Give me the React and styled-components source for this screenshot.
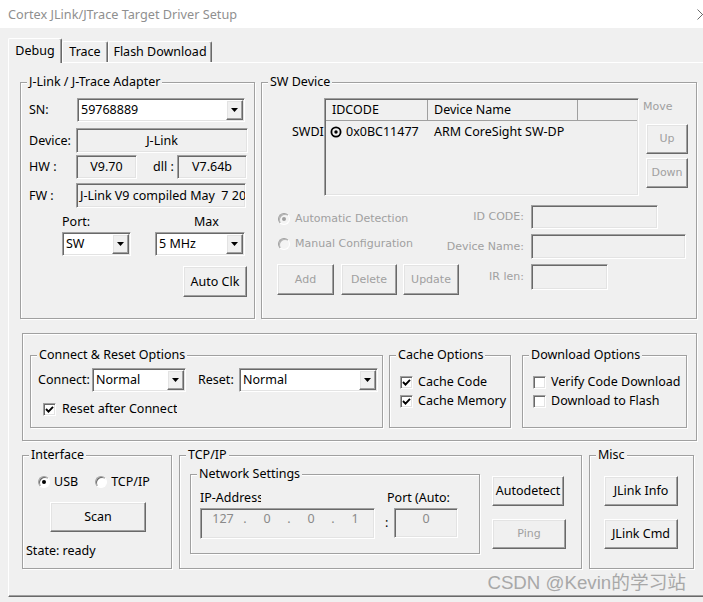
import React from "react";
import styled, { createGlobalStyle, css } from "styled-components";

const UI = `"Noto Sans", "Open Sans", sans-serif`;
const OLD = `"DejaVu Sans", "Liberation Sans", sans-serif`;

const Global = createGlobalStyle`
  html, body { margin: 0; padding: 0; background: #f0f0f0; }
  body { font-family: ${UI}; }
  *, *::before, *::after { box-sizing: border-box; }
`;

const dimText = css`
  font-family: ${OLD};
  font-size: 11px;
  color: #a0a0a0;
`;

const sunken = css`
  border: 1px solid;
  border-color: #a0a0a0 #ffffff #ffffff #a0a0a0;
  box-shadow: inset 1px 1px #696969, inset -1px -1px #e3e3e3;
`;

const raised = css`
  border: 1px solid;
  border-color: #ffffff #696969 #696969 #ffffff;
  box-shadow: inset -1px -1px #a0a0a0, inset 1px 1px #e3e3e3;
`;

const Window = styled.div`
  position: relative;
  width: 703px;
  height: 602px;
  overflow: hidden;
  display: flex;
  flex-direction: column;
  background: #f0f0f0;
  font-family: ${UI};
  font-size: 12.5px;
  line-height: 16px;
  color: #000;
`;

const TitleBar = styled.div`
  flex: none;
  height: 28px;
  background: #fff;
  display: flex;
  align-items: center;
  justify-content: space-between;
  padding-left: 8px;
`;

const Title = styled.div`
  font-size: 12.7px;
  color: #8f8f8f;
  white-space: nowrap;
`;

const CloseIcon = styled.svg`
  flex: none;
  margin-right: -5px;
`;

const Body = styled.div`
  flex: 1;
  display: flex;
  flex-direction: column;
  padding-left: 8px;
`;

const TabStrip = styled.div`
  flex: none;
  height: 34px;
  display: flex;
  align-items: flex-end;
`;

const Tab = styled.div`
  flex: none;
  width: ${(p) => p.$w}px;
  height: ${(p) => (p.$active ? 25 : 21)}px;
  margin-bottom: ${(p) => (p.$active ? -1 : 0)}px;
  position: relative;
  z-index: ${(p) => (p.$active ? 1 : 0)};
  background: #f0f0f0;
  border-top: 1px solid #fff;
  border-left: 1px solid #fff;
  border-right: 1px solid #696969;
  box-shadow: inset -1px 0 #a0a0a0;
  border-radius: 2px 2px 0 0;
  display: flex;
  align-items: center;
  justify-content: center;
  white-space: nowrap;
`;

const TabPage = styled.div`
  flex: none;
  height: 535px;
  border-top: 1px solid #fff;
  border-left: 1px solid #fff;
  border-bottom: 1px solid #696969;
  box-shadow: inset 0 -1px #a0a0a0;
  padding: 19px 0 0 11px;
  display: flex;
  flex-direction: column;
`;

const Row = styled.div`
  display: flex;
  align-items: flex-start;
  gap: ${(p) => p.$gap || 0}px;
  margin-top: ${(p) => p.$mt || 0}px;
  margin-left: ${(p) => p.$ml || 0}px;
`;

const GroupBox = styled.div`
  flex: none;
  position: relative;
  width: ${(p) => p.$w}px;
  height: ${(p) => p.$h}px;
  margin-left: ${(p) => p.$ml || 0}px;
  border: 1px solid #a0a0a0;
  box-shadow: inset 1px 1px #fff, 1px 1px #fff;
`;

const GroupTitle = styled.span`
  position: absolute;
  top: -9px;
  left: 6px;
  padding: 0 2px;
  background: #f0f0f0;
  line-height: 16px;
  white-space: nowrap;
`;

const Label = styled.span`
  flex: none;
  width: ${(p) => (p.$w ? `${p.$w}px` : "auto")};
  margin-left: ${(p) => p.$ml || 0}px;
  padding-left: ${(p) => p.$pl || 0}px;
  text-align: ${(p) => (p.$right ? "right" : "left")};
  white-space: pre;
  overflow: hidden;
  ${(p) => p.$disabled && dimText}
`;

const Combo = styled.div`
  flex: none;
  width: ${(p) => p.$w}px;
  height: ${(p) => p.$h || 24}px;
  margin-left: ${(p) => p.$ml || 0}px;
  ${sunken};
  background: #fff;
  padding: 1px;
  display: flex;
`;

const ComboText = styled.div`
  flex: 1;
  min-width: 0;
  padding-left: 2px;
  display: flex;
  align-items: center;
  white-space: nowrap;
  overflow: hidden;
`;

const DropBtn = styled.div`
  flex: none;
  width: 17px;
  ${raised};
  background: #f0f0f0;
  display: flex;
  align-items: center;
  justify-content: center;
`;

const ReadBox = styled.div`
  flex: none;
  width: ${(p) => p.$w}px;
  height: ${(p) => p.$h || 24}px;
  ${sunken};
  background: #f0f0f0;
  display: flex;
  align-items: ${(p) => (p.$top ? "flex-start" : "center")};
  justify-content: ${(p) => (p.$center ? "center" : "flex-start")};
  padding: ${(p) => (p.$top ? "2px 0 0 0" : "0")};
  padding-left: ${(p) => (p.$center ? 0 : 3)}px;
  white-space: pre;
  overflow: hidden;
  color: ${(p) => (p.$grey ? "#8a8a8a" : "#000")};
`;

const Button = styled.button`
  flex: none;
  width: ${(p) => p.$w}px;
  height: ${(p) => p.$h || 30}px;
  margin-left: ${(p) => p.$ml || 0}px;
  margin-top: ${(p) => p.$mt || 0}px;
  padding: 0;
  ${raised};
  background: #f0f0f0;
  font: inherit;
  color: #000;
  display: flex;
  align-items: center;
  justify-content: center;
  white-space: nowrap;
  cursor: default;
  ${(p) => p.$disabled && dimText}
`;

const Check = styled.span`
  flex: none;
  width: 13px;
  height: 13px;
  ${sunken};
  background: #fff;
  display: flex;
  align-items: center;
  justify-content: center;
`;

const RadioDot = styled.span`
  flex: none;
  position: relative;
  width: 12px;
  height: 12px;
  border-radius: 50%;
  border: 1px solid;
  border-color: #a0a0a0 #fff #fff #a0a0a0;
  box-shadow: inset 1px 1px ${(p) => (p.$disabled ? "#b4b4b4" : "#696969")};
  background: ${(p) => (p.$disabled ? "#f4f4f4" : "#fff")};
  margin-left: ${(p) => p.$ml || 0}px;
  &::after {
    content: "";
    display: ${(p) => (p.$on ? "block" : "none")};
    position: absolute;
    left: 3px;
    top: 3px;
    width: 4px;
    height: 4px;
    border-radius: 50%;
    background: ${(p) => (p.$disabled ? "#a0a0a0" : "#000")};
  }
`;

const OptionItem = styled.div`
  display: flex;
  align-items: center;
  gap: ${(p) => p.$gap || 5}px;
  height: 16px;
  margin-left: ${(p) => p.$ml || 0}px;
  white-space: nowrap;
  overflow: hidden;
  width: ${(p) => (p.$w ? `${p.$w}px` : "auto")};
  ${(p) => p.$disabled && dimText}
`;

/* ---------- adapter ---------- */
const AdapterBody = styled.div`
  display: flex;
  flex-direction: column;
  padding: 15px 0 0 8px;
`;

const FieldRow = styled.div`
  display: flex;
  align-items: center;
  margin-top: ${(p) => p.$mt || 0}px;
`;

const PortGrid = styled.div`
  display: grid;
  grid-template-columns: 69px 90px;
  column-gap: 24px;
  row-gap: 2px;
  margin-top: 6px;
  padding-left: 33px;
`;

/* ---------- SW device ---------- */
const SwTop = styled.div`
  display: flex;
  align-items: flex-start;
  padding: 15px 0 0 30px;
`;

const SwdiLabel = styled.span`
  flex: none;
  width: 32px;
  margin-top: 26px;
  white-space: nowrap;
  overflow: hidden;
`;

const ListView = styled.div`
  flex: none;
  width: 315px;
  height: 98px;
  ${sunken};
  background: #f0f0f0;
  padding: 1px;
  display: flex;
  flex-direction: column;
  overflow: hidden;
`;

const ListHeader = styled.div`
  display: flex;
  height: 21px;
  border-bottom: 1px solid #a0a0a0;
`;

const HeaderCell = styled.div`
  flex: ${(p) => (p.$w ? "none" : "1")};
  width: ${(p) => (p.$w ? `${p.$w}px` : "auto")};
  border-right: ${(p) => (p.$w ? "1px solid #a0a0a0" : "none")};
  padding-left: 6px;
  display: flex;
  align-items: center;
  white-space: nowrap;
`;

const ListRow = styled.div`
  display: flex;
  height: 21px;
  align-items: center;
`;

const ListCell = styled.div`
  flex: none;
  width: ${(p) => p.$w}px;
  padding-left: ${(p) => p.$pl}px;
  display: flex;
  align-items: center;
  gap: 4px;
  white-space: nowrap;
`;

const MoveCol = styled.div`
  display: flex;
  flex-direction: column;
  margin-left: 4px;
`;

const MoveLabel = styled.span`
  ${dimText};
  margin-top: 1px;
  line-height: 16px;
`;

const SwBottom = styled.div`
  display: flex;
  flex-direction: column;
  gap: 5px;
  margin-top: 9px;
  padding-left: 15px;
`;

const SwRow = styled.div`
  display: flex;
  align-items: ${(p) => (p.$start ? "flex-start" : "center")};
  height: ${(p) => p.$h}px;
`;

const LeftCell = styled.div`
  flex: none;
  width: ${(p) => p.$w}px;
  display: flex;
  align-items: center;
  padding-top: ${(p) => p.$pt || 0}px;
  padding-bottom: ${(p) => p.$pb || 0}px;
`;

const FieldPair = styled.div`
  display: flex;
  align-items: center;
  gap: 7px;
`;

/* ---------- options frame ---------- */
const FrameInner = styled.div`
  display: flex;
  align-items: flex-start;
  padding: 21px 0 0 7px;
`;

const ConnectBody = styled.div`
  display: flex;
  flex-direction: column;
  padding: 12px 0 0 7px;
`;

const CheckList = styled.div`
  display: flex;
  flex-direction: column;
  gap: 3px;
  padding: 18px 0 0 10px;
`;

/* ---------- bottom row ---------- */
const InterfaceBody = styled.div`
  display: flex;
  flex-direction: column;
  align-items: flex-start;
  padding-left: 3px;
`;

const RadioRow = styled.div`
  display: flex;
  gap: 17px;
  margin: 18px 0 0 12px;
`;

const StateText = styled.div`
  margin-top: 11px;
`;

const TcpBody = styled.div`
  display: flex;
  align-items: flex-start;
  padding: 18px 0 0 10px;
`;

const NsBody = styled.div`
  display: flex;
  align-items: flex-start;
  padding: 15px 0 0 9px;
`;

const Col = styled.div`
  display: flex;
  flex-direction: column;
  align-items: flex-start;
  margin-left: ${(p) => p.$ml || 0}px;
  margin-top: ${(p) => p.$mt || 0}px;
  padding-left: ${(p) => p.$pl || 0}px;
`;

const IpBox = styled.div`
  width: 175px;
  height: 31px;
  margin-top: 2px;
  ${sunken};
  background: #f0f0f0;
  display: flex;
  align-items: flex-start;
  padding: 2px 0 0 4px;
  color: #8a8a8a;
`;

const Octet = styled.span`
  flex: none;
  width: ${(p) => (p.$dot ? 8 : 36)}px;
  text-align: center;
`;

const PortRow = styled.div`
  display: flex;
  align-items: center;
  margin-top: 2px;
`;

const Colon = styled.span`
  width: 9px;
`;

const Watermark = styled.div`
  position: absolute;
  right: 17px;
  top: 571px;
  font-family: "Liberation Sans", "Noto Sans CJK SC", sans-serif;
  font-size: 18.7px;
  line-height: 24px;
  color: #a8a8a8;
  white-space: nowrap;
`;

/* ---------- small parts ---------- */
const Tri = () => (
  <svg width="7" height="4" viewBox="0 0 7 4">
    <polygon points="0,0 7,0 3.5,4" fill="#000" />
  </svg>
);

const Drop = ({ w, h, ml, children }) => (
  <Combo $w={w} $h={h} $ml={ml}>
    <ComboText>{children}</ComboText>
    <DropBtn>
      <Tri />
    </DropBtn>
  </Combo>
);

const CheckBox = ({ on }) => (
  <Check>
    {on && (
      <svg width="9" height="9" viewBox="0 0 9 9">
        <polyline points="1,4 3.5,6.6 8,1.8" fill="none" stroke="#000" strokeWidth="1.9" />
      </svg>
    )}
  </Check>
);

const TargetIcon = () => (
  <svg width="12" height="12" viewBox="0 0 12 12">
    <circle cx="6" cy="6" r="4.6" fill="none" stroke="#000" strokeWidth="1.8" />
    <circle cx="6" cy="6" r="1.7" fill="#000" />
  </svg>
);

export default function App() {
  return (
    <Window>
      <Global />
      <TitleBar>
        <Title>Cortex JLink/JTrace Target Driver Setup</Title>
        <CloseIcon width="11" height="11" viewBox="0 0 11 11">
          <path d="M0.5 0.5 L10.5 10.5 M10.5 0.5 L0.5 10.5" stroke="#6a6a6a" strokeWidth="1" />
        </CloseIcon>
      </TitleBar>

      <Body>
        <TabStrip>
          <Tab $w={54} $active>Debug</Tab>
          <Tab $w={46}>Trace</Tab>
          <Tab $w={104}>Flash Download</Tab>
        </TabStrip>

        <TabPage>
          <Row $gap={6}>
            <GroupBox $w={235} $h={237}>
              <GroupTitle>J-Link / J-Trace Adapter</GroupTitle>
              <AdapterBody>
                <FieldRow>
                  <Label $w={47}>SN:</Label>
                  <Drop w={168} ml={1}>59768889</Drop>
                </FieldRow>
                <FieldRow $mt={6}>
                  <Label $w={47}>Device:</Label>
                  <ReadBox $w={172} $h={25} $center>J-Link</ReadBox>
                </FieldRow>
                <FieldRow $mt={2}>
                  <Label $w={47}>HW :</Label>
                  <ReadBox $w={61} $h={24} $center>V9.70</ReadBox>
                  <Label $w={24} $ml={16}>dll :</Label>
                  <ReadBox $w={70} $h={24} $center>V7.64b</ReadBox>
                </FieldRow>
                <FieldRow $mt={4}>
                  <Label $w={47}>FW :</Label>
                  <ReadBox $w={170} $h={25}>J-Link V9 compiled May  7 2018 10:36:57</ReadBox>
                </FieldRow>
                <PortGrid>
                  <Label>Port:</Label>
                  <Label $pl={39}>Max</Label>
                  <Drop w={69}>SW</Drop>
                  <Drop w={90}>5 MHz</Drop>
                </PortGrid>
                <Button $w={64} $h={31} $ml={154} $mt={10}>Auto Clk</Button>
              </AdapterBody>
            </GroupBox>

            <GroupBox $w={436} $h={237}>
              <GroupTitle>SW Device</GroupTitle>
              <SwTop>
                <SwdiLabel>SWDI</SwdiLabel>
                <ListView>
                  <ListHeader>
                    <HeaderCell $w={102}>IDCODE</HeaderCell>
                    <HeaderCell $w={150}>Device Name</HeaderCell>
                    <HeaderCell />
                  </ListHeader>
                  <ListRow>
                    <ListCell $w={102} $pl={4}>
                      <TargetIcon />
                      0x0BC11477
                    </ListCell>
                    <ListCell $w={150} $pl={6}>ARM CoreSight SW-DP</ListCell>
                  </ListRow>
                </ListView>
                <MoveCol>
                  <MoveLabel>Move</MoveLabel>
                  <Button $w={42} $h={30} $ml={3} $mt={9} $disabled>Up</Button>
                  <Button $w={42} $h={30} $ml={3} $mt={4} $disabled>Down</Button>
                </MoveCol>
              </SwTop>

              <SwBottom>
                <SwRow $h={24}>
                  <LeftCell $w={165} $pt={4}>
                    <OptionItem $disabled>
                      <RadioDot $disabled $on $ml={1} />
                      Automatic Detection
                    </OptionItem>
                  </LeftCell>
                  <FieldPair>
                    <Label $w={82} $right $disabled>ID CODE:</Label>
                    <ReadBox $w={127} $h={24} />
                  </FieldPair>
                </SwRow>
                <SwRow $h={25}>
                  <LeftCell $w={165} $pb={5}>
                    <OptionItem $disabled>
                      <RadioDot $disabled $ml={1} />
                      Manual Configuration
                    </OptionItem>
                  </LeftCell>
                  <FieldPair>
                    <Label $w={82} $right $disabled>Device Name:</Label>
                    <ReadBox $w={155} $h={25} />
                  </FieldPair>
                </SwRow>
                <SwRow $h={31} $start>
                  <LeftCell $w={210}>
                    <Button $w={57} $h={31} $disabled>Add</Button>
                    <Button $w={56} $h={31} $ml={7} $disabled>Delete</Button>
                    <Button $w={56} $h={31} $ml={6} $disabled>Update</Button>
                  </LeftCell>
                  <FieldPair>
                    <Label $w={37} $right $disabled>IR len:</Label>
                    <ReadBox $w={77} $h={26} />
                  </FieldPair>
                </SwRow>
              </SwBottom>
            </GroupBox>
          </Row>

          <Row $mt={14} $ml={2}>
            <GroupBox $w={675} $h={108}>
              <FrameInner>
                <GroupBox $w={353} $h={73}>
                  <GroupTitle>Connect &amp; Reset Options</GroupTitle>
                  <ConnectBody>
                    <FieldRow>
                      <Label $w={54}>Connect:</Label>
                      <Drop w={94}>Normal</Drop>
                      <Label $w={41} $ml={12}>Reset:</Label>
                      <Drop w={139}>Normal</Drop>
                    </FieldRow>
                    <FieldRow $mt={9}>
                      <OptionItem $gap={6} $ml={5}>
                        <CheckBox on />
                        Reset after Connect
                      </OptionItem>
                    </FieldRow>
                  </ConnectBody>
                </GroupBox>

                <GroupBox $w={122} $h={73} $ml={6}>
                  <GroupTitle>Cache Options</GroupTitle>
                  <CheckList>
                    <OptionItem>
                      <CheckBox on />
                      Cache Code
                    </OptionItem>
                    <OptionItem>
                      <CheckBox on />
                      Cache Memory
                    </OptionItem>
                  </CheckList>
                </GroupBox>

                <GroupBox $w={165} $h={73} $ml={11}>
                  <GroupTitle>Download Options</GroupTitle>
                  <CheckList>
                    <OptionItem $w={148}>
                      <CheckBox />
                      Verify Code Download
                    </OptionItem>
                    <OptionItem $w={148}>
                      <CheckBox />
                      Download to Flash
                    </OptionItem>
                  </CheckList>
                </GroupBox>
              </FrameInner>
            </GroupBox>
          </Row>

          <Row $mt={14} $ml={2}>
            <GroupBox $w={150} $h={114}>
              <GroupTitle>Interface</GroupTitle>
              <InterfaceBody>
                <RadioRow>
                  <OptionItem $gap={4}>
                    <RadioDot $on />
                    USB
                  </OptionItem>
                  <OptionItem $gap={4}>
                    <RadioDot />
                    TCP/IP
                  </OptionItem>
                </RadioRow>
                <Button $w={96} $h={30} $ml={24} $mt={12}>Scan</Button>
                <StateText>State: ready</StateText>
              </InterfaceBody>
            </GroupBox>

            <GroupBox $w={403} $h={114} $ml={7}>
              <GroupTitle>TCP/IP</GroupTitle>
              <TcpBody>
                <GroupBox $w={290} $h={80}>
                  <GroupTitle>Network Settings</GroupTitle>
                  <NsBody>
                    <Col>
                      <Label $w={61}>IP-Address</Label>
                      <IpBox>
                        <Octet>127</Octet>
                        <Octet $dot>.</Octet>
                        <Octet>0</Octet>
                        <Octet $dot>.</Octet>
                        <Octet>0</Octet>
                        <Octet $dot>.</Octet>
                        <Octet>1</Octet>
                      </IpBox>
                    </Col>
                    <Col $ml={10}>
                      <Label $pl={2}>Port (Auto:</Label>
                      <PortRow>
                        <Colon>:</Colon>
                        <ReadBox $w={64} $h={30} $center $top $grey>0</ReadBox>
                      </PortRow>
                    </Col>
                  </NsBody>
                </GroupBox>
                <Col $ml={12} $mt={2}>
                  <Button $w={72} $h={30}>Autodetect</Button>
                  <Button $w={74} $h={30} $mt={13} $disabled>Ping</Button>
                </Col>
              </TcpBody>
            </GroupBox>

            <GroupBox $w={105} $h={114} $ml={7}>
              <GroupTitle>Misc</GroupTitle>
              <Col $pl={14} $mt={20}>
                <Button $w={74} $h={30}>JLink Info</Button>
                <Button $w={74} $h={30} $mt={13}>JLink Cmd</Button>
              </Col>
            </GroupBox>
          </Row>
        </TabPage>
      </Body>

      <Watermark>CSDN @Kevin的学习站</Watermark>
    </Window>
  );
}
